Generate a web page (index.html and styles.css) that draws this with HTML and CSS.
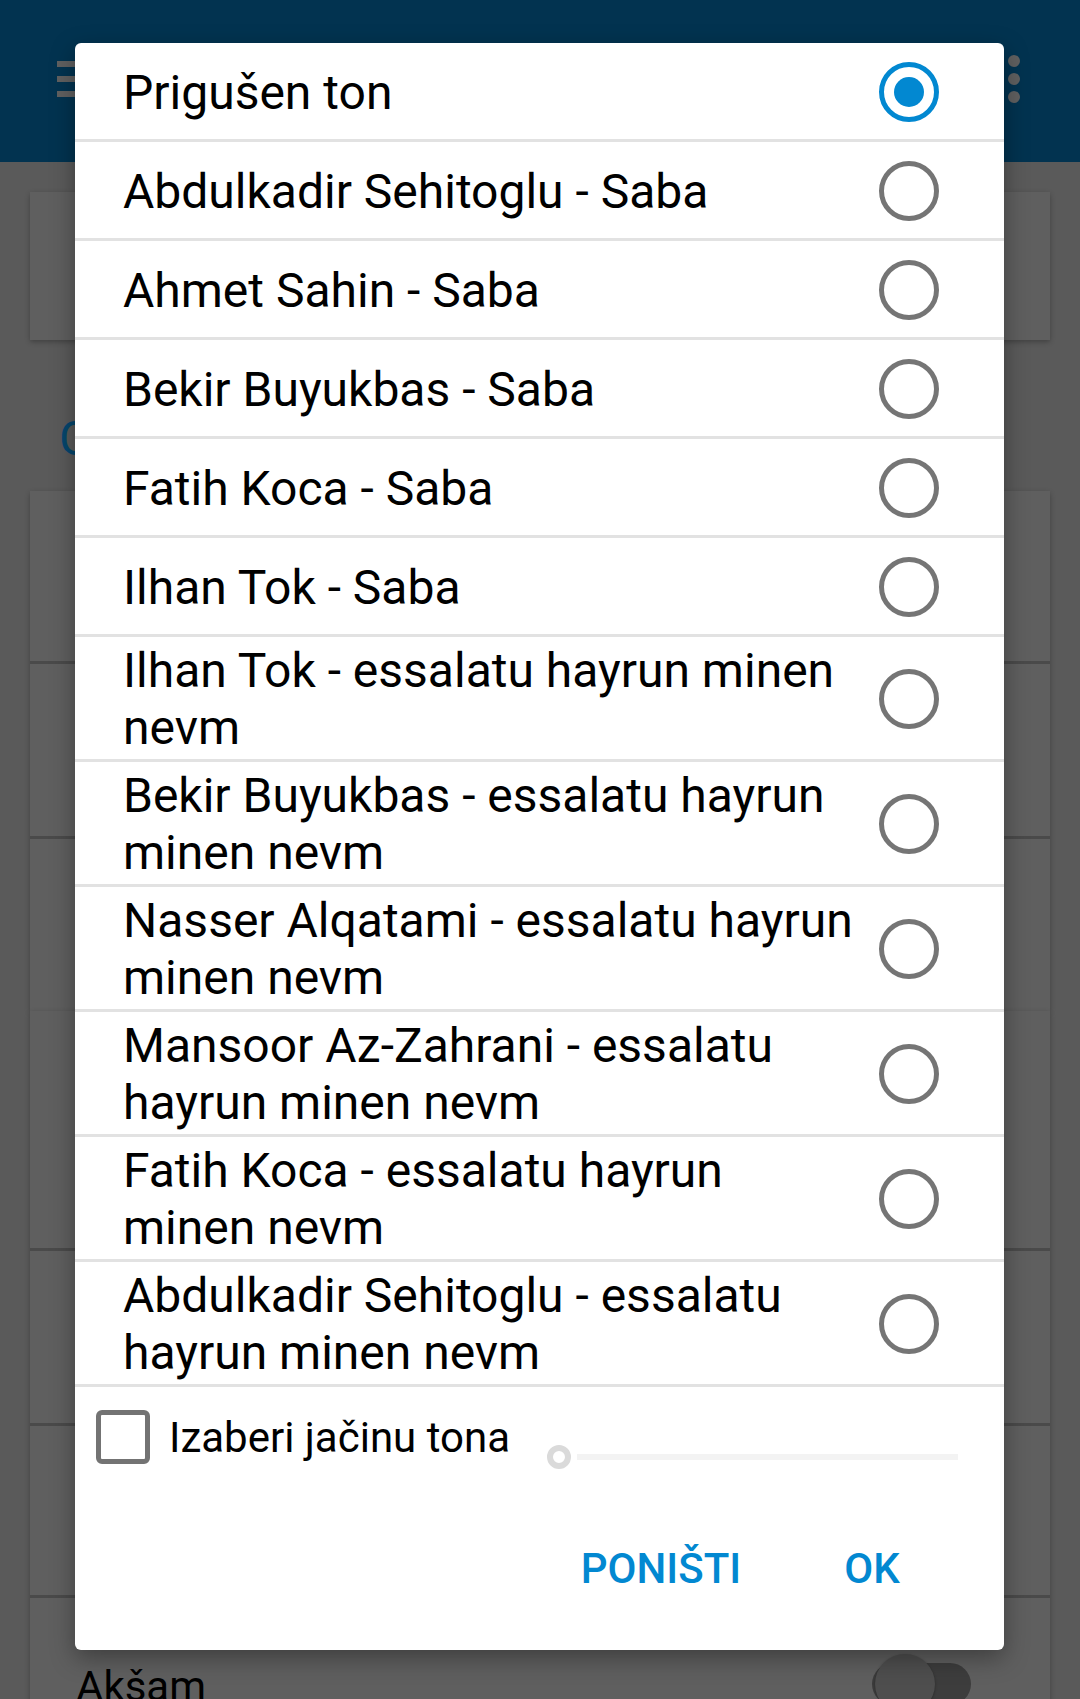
FILE: index.html
```html
<!DOCTYPE html>
<html lang="bs">
<head>
<meta charset="utf-8">
<title>Prigušen ton</title>
<link rel="stylesheet" href="styles.css">
</head>
<body>
<div class="screen">
  <header class="toolbar">
    <div class="hamburger"><span></span><span></span><span></span></div>
    <div class="overflow-dots"><span></span><span></span><span></span></div>
  </header>

  <main class="content">
    <section class="card card-intro"></section>
    <h2 class="section-title">Glas ezana</h2>
    <section class="card card-group">
      <div class="card-row row-a"></div>
      <div class="card-row row-b"></div>
      <div class="card-row row-c"></div>
    </section>
    <section class="card card-group">
      <div class="card-row row-d"></div>
      <div class="card-row row-b"></div>
      <div class="card-row row-c"></div>
      <div class="card-row row-prayer">
        <span class="prayer-name">Akšam</span>
        <span class="switch"><span class="switch-thumb"></span></span>
      </div>
    </section>
  </main>

  <div class="dialog" role="dialog">
    <ul class="choices">
      <li class="choice"><span class="choice-label">Prigušen ton</span><span class="radio checked"></span></li>
      <li class="choice"><span class="choice-label">Abdulkadir Sehitoglu - Saba</span><span class="radio"></span></li>
      <li class="choice"><span class="choice-label">Ahmet Sahin - Saba</span><span class="radio"></span></li>
      <li class="choice"><span class="choice-label">Bekir Buyukbas - Saba</span><span class="radio"></span></li>
      <li class="choice"><span class="choice-label">Fatih Koca - Saba</span><span class="radio"></span></li>
      <li class="choice"><span class="choice-label">Ilhan Tok - Saba</span><span class="radio"></span></li>
      <li class="choice"><span class="choice-label">Ilhan Tok - essalatu hayrun minen nevm</span><span class="radio"></span></li>
      <li class="choice"><span class="choice-label">Bekir Buyukbas - essalatu hayrun minen nevm</span><span class="radio"></span></li>
      <li class="choice"><span class="choice-label">Nasser Alqatami - essalatu hayrun minen nevm</span><span class="radio"></span></li>
      <li class="choice"><span class="choice-label">Mansoor Az-Zahrani - essalatu hayrun minen nevm</span><span class="radio"></span></li>
      <li class="choice"><span class="choice-label">Fatih Koca - essalatu hayrun minen nevm</span><span class="radio"></span></li>
      <li class="choice"><span class="choice-label">Abdulkadir Sehitoglu - essalatu hayrun minen nevm</span><span class="radio"></span></li>
    </ul>
    <div class="volume">
      <span class="checkbox"></span>
      <span class="volume-label">Izaberi jačinu tona</span>
      <span class="slider"><span class="slider-thumb"></span><span class="slider-track"></span></span>
    </div>
    <div class="actions">
      <span class="btn">PONIŠTI</span>
      <span class="btn">OK</span>
    </div>
  </div>
</div>
</body>
</html>
```

FILE: styles.css
```css
html, body {
  margin: 0;
  padding: 0;
}

body {
  font-family: Roboto, "Noto Sans", "Liberation Sans", sans-serif;
  background: #5a5a5a;
}

.screen {
  position: relative;
  width: 1080px;
  height: 1699px;
  overflow: hidden;
  background: #5a5a5a;
}

/* ---------- dimmed app behind the dialog ---------- */
.toolbar {
  height: 162px;
  background: #023350;
  display: flex;
  justify-content: space-between;
  align-items: flex-start;
  padding: 0 60px 0 57px;
  box-sizing: border-box;
}

.hamburger {
  display: flex;
  flex-direction: column;
  gap: 9px;
  margin-top: 61px;
}

.hamburger span {
  display: block;
  width: 54px;
  height: 6px;
  background: #606060;
}

.overflow-dots {
  display: flex;
  flex-direction: column;
  gap: 6px;
  margin-top: 55px;
}

.overflow-dots span {
  display: block;
  width: 12px;
  height: 12px;
  border-radius: 50%;
  background: #606060;
}

.content {
  padding: 30px 30px 0;
}

.card {
  background: #5f5f5f;
  box-shadow: 0 2px 5px rgba(0, 0, 0, 0.28);
}

.card-intro {
  height: 148px;
}

.section-title {
  margin: 71px 0 24px 29px;
  font-size: 48px;
  line-height: 56px;
  font-weight: 400;
  color: #05466d;
}

.card-row {
  border-bottom: 3px solid #4a4a4a;
  box-sizing: border-box;
}

.card-row:last-child {
  border-bottom: none;
}

.row-a { height: 173px; }
.row-b { height: 175px; }
.row-c { height: 172px; }
.row-d { height: 240px; }

.row-prayer {
  height: 140px;
  display: flex;
  justify-content: space-between;
  align-items: flex-start;
  padding: 64px 79px 0 46px;
}

.prayer-name {
  font-size: 42px;
  line-height: 49px;
  color: #000;
}

.switch {
  position: relative;
  width: 99px;
  height: 42px;
  margin-top: 1px;
  border-radius: 21px;
  background: #3d3d3d;
}

.switch-thumb {
  position: absolute;
  left: 3px;
  top: -9px;
  width: 60px;
  height: 60px;
  border-radius: 50%;
  background: #4e4e4e;
  box-shadow: 0 1px 3px rgba(0, 0, 0, 0.3);
}

/* ---------- dialog ---------- */
.dialog {
  position: absolute;
  left: 75px;
  top: 43px;
  width: 929px;
  background: #fff;
  border-radius: 6px;
  overflow: hidden;
  box-shadow: 0 8px 24px rgba(0, 0, 0, 0.35);
}

.choices {
  list-style: none;
  margin: 0;
  padding: 0;
}

.choice {
  display: flex;
  align-items: center;
  min-height: 99px;
  box-sizing: border-box;
  padding: 5px 65px 3px 48px;
  border-bottom: 3px solid #e2e2e2;
}

.choice-label {
  flex: 1;
  font-size: 48px;
  line-height: 57px;
  color: #000;
}

.radio {
  flex-shrink: 0;
  width: 60px;
  height: 60px;
  margin-left: 23px;
  box-sizing: border-box;
  border: 5.5px solid #757575;
  border-radius: 50%;
  display: flex;
  align-items: center;
  justify-content: center;
}

.radio.checked {
  border-color: #0288d1;
}

.radio.checked::after {
  content: "";
  width: 30px;
  height: 30px;
  border-radius: 50%;
  background: #0288d1;
}

.volume {
  display: flex;
  align-items: center;
  padding: 18px 0 0 21px;
}

.checkbox {
  width: 54px;
  height: 54px;
  box-sizing: border-box;
  border: 5.5px solid #737373;
  border-radius: 6px;
  flex-shrink: 0;
}

.volume-label {
  margin-left: 19px;
  font-size: 42px;
  line-height: 49px;
  color: #000;
}

.slider {
  display: flex;
  align-items: center;
  margin: 40px 0 0 37px;
  width: 411px;
  height: 24px;
}

.slider-thumb {
  width: 24px;
  height: 24px;
  box-sizing: border-box;
  border: 6px solid #dadada;
  border-radius: 50%;
  flex-shrink: 0;
}

.slider-track {
  flex: 1;
  height: 6px;
  margin-left: 6px;
  background: #f3f3f3;
}

.actions {
  display: flex;
  justify-content: flex-end;
  gap: 19px;
  padding: 46px 36px 27px 0;
}

.btn {
  min-width: 192px;
  height: 108px;
  line-height: 108px;
  text-align: center;
  font-size: 42px;
  font-weight: 500;
  color: #0288d1;
}
```
